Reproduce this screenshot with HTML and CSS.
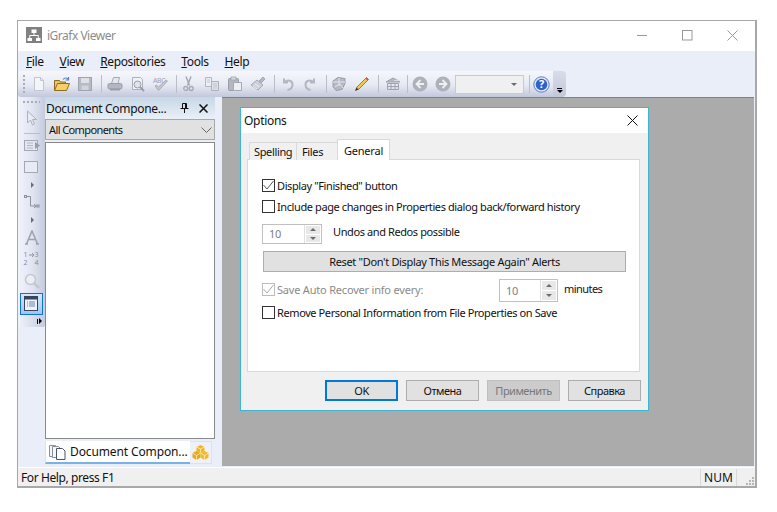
FILE: index.html
```html
<!DOCTYPE html>
<html lang="en">
<head>
<meta charset="utf-8">
<title>iGrafx Viewer</title>
<link rel="stylesheet" href="styles.css">
</head>
<body>
<div class="window">
  <header class="titlebar">
    <svg class="app-icon" width="16" height="16" viewBox="0 0 16 16"><rect width="16" height="16" fill="#808080"/><path d="M5.500 2.500h5v3.500h-5zM1.500 11h4.500v3h-4.500zM10 11h4.500v3H10z" fill="#fff"/><path d="M8 6v3M3.700 11V8.500h8.600V11" stroke="#fff" fill="none"/></svg>
    <span class="app-title">iGrafx Viewer</span>
    <span class="caption-btns">
      <svg width="11" height="11" viewBox="0 0 11 11"><path d="M0 5.500h10" stroke="#999"/></svg>
      <svg width="11" height="11" viewBox="0 0 11 11"><rect x=".5" y=".5" width="9.500" height="9.500" fill="none" stroke="#999"/></svg>
      <svg width="11" height="11" viewBox="0 0 11 11"><path d="M.500.500l10 10M10.500.500l-10 10" stroke="#999"/></svg>
    </span>
  </header>
  <nav class="menubar">
    <span><u>F</u>ile</span><span><u>V</u>iew</span><span><u>R</u>epositories</span><span><u>T</u>ools</span><span><u>H</u>elp</span>
  </nav>
  <div class="toolrow">
    <div class="toolbar">
      <i class="grip-v"></i>
      <span class="tb"><svg width="16" height="16" viewBox="0 0 16 16"><path d="M3.500 1.500h6l3 3v10h-9z" fill="#f4f5f8" stroke="#c2c5cf"/><path d="M9.500 1.500v3h3" fill="none" stroke="#c2c5cf"/></svg></span>
      <span class="tb"><svg width="18" height="16" viewBox="0 0 18 16"><path d="M1.500 14.500v-10h5l1 1.500h5v2" fill="#e8c468" stroke="#8f6b1c"/><path d="M1.500 14.500l3-7h12l-3 7z" fill="#f5cf6a" stroke="#8f6b1c"/><path d="M10 3.500c1.500-2 4-2 5.500 0M15.500 1v3h-3" fill="none" stroke="#5f7fc0" stroke-width="1.200"/></svg></span>
      <span class="tb"><svg width="16" height="16" viewBox="0 0 16 16"><rect x="1.500" y="1.500" width="13" height="13" fill="#b8bbc5" stroke="#a0a3ae"/><rect x="4" y="2" width="8" height="5" fill="#dfe1e7"/><rect x="4.500" y="9.500" width="7" height="4.500" fill="#d2d4db"/></svg></span>
      <i class="sep"></i>
      <span class="tb"><svg width="16" height="16" viewBox="0 0 16 16"><path d="M4.500 7.500l2-6h6l-1.500 6z" fill="#e6e7ec" stroke="#a6a9b3"/><rect x="1" y="7.500" width="14" height="5.500" rx="1.500" fill="#b4b7c1" stroke="#9a9da8"/><path d="M3 13.500h10" stroke="#9a9da8" stroke-width="2"/></svg></span>
      <span class="tb"><svg width="16" height="16" viewBox="0 0 16 16"><path d="M2.500 1.500h8l2 2v10h-10z" fill="#f1f2f6" stroke="#aeb1bb"/><circle cx="7.500" cy="8.500" r="3.500" fill="#dfe3ee" stroke="#9a9da8"/><path d="M10 11l4 4" stroke="#9a9da8" stroke-width="2"/></svg></span>
      <span class="tb"><svg width="17" height="16" viewBox="0 0 17 16"><text x="1" y="6.500" class="abc">ABC</text><path d="M3 10l3.500 4.500L15.500 5l-1.500-1-7.500 7-2-2z" fill="#c5c8d2" stroke="#9fa2ad" stroke-width=".8"/></svg></span>
      <i class="sep sep-narrow"></i>
      <span class="tb"><svg width="11" height="16" viewBox="0 0 11 16"><path d="M3 .500l3.500 9M8 .500L4.500 9.500" stroke="#a6a9b3" stroke-width="1.500"/><circle cx="2.800" cy="12.500" r="2" fill="none" stroke="#a6a9b3" stroke-width="1.300"/><circle cx="8.200" cy="12.500" r="2" fill="none" stroke="#a6a9b3" stroke-width="1.300"/></svg></span>
      <span class="tb"><svg width="16" height="16" viewBox="0 0 16 16"><path d="M1.500 1.500h6v9h-6z" fill="#eceef3" stroke="#b4b7c1"/><path d="M7.500 5.500h7v9h-7z" fill="#dfe1e8" stroke="#aeb1bb"/><path d="M3 4h3M3 6h3M9 8h4M9 10h4M9 12h4" stroke="#c2c5ce"/></svg></span>
      <span class="tb"><svg width="16" height="16" viewBox="0 0 16 16"><rect x="1.500" y="2.500" width="10" height="12" rx="1" fill="#b4b7c1" stroke="#9a9da8"/><rect x="4" y="1" width="5" height="3" fill="#d6d8df" stroke="#9a9da8" stroke-width=".7"/><path d="M6.500 6.500h8v8h-8z" fill="#eceef3" stroke="#a6a9b3"/></svg></span>
      <span class="tb"><svg width="16" height="16" viewBox="0 0 16 16"><path d="M1 9l6-5 6 5-5 5z" fill="#cfd1d9" stroke="#a6a9b3"/><path d="M9 5l4-4 2 2-4 4z" fill="#b4b7c1" stroke="#a6a9b3"/><path d="M3 10l4 3M5 8l4 3" stroke="#eceef3"/></svg></span>
      <i class="sep"></i>
      <span class="tb"><svg width="13" height="14" viewBox="0 0 13 14"><path d="M3 1.500v4h4M3.500 5.500C6 2.500 11.500 3 11.500 7.500c0 3-2 5-5 5.500" fill="none" stroke="#b4b7c1" stroke-width="2"/></svg></span>
      <span class="tb"><svg width="13" height="14" viewBox="0 0 13 14"><path d="M10 1.500v4H6M9.500 5.500C7 2.500 1.500 3 1.500 7.500c0 3 2 5 5 5.500" fill="none" stroke="#b4b7c1" stroke-width="2"/></svg></span>
      <i class="sep sep-narrow"></i>
      <span class="tb"><svg width="16" height="16" viewBox="0 0 16 16"><path d="M2 5l5-3.500 7 1v5l-3 6-6 1-3-4z" fill="#b6b9c3" stroke="#9a9da8"/><path d="M2 6h12M8 2v8M4 11l5-3 3 4" fill="none" stroke="#e4e6ec"/></svg></span>
      <span class="tb"><svg width="16" height="16" viewBox="0 0 16 16"><path d="M3 11L12.500 1.500l2 2L5 13l-3 1z" fill="#f0c850" stroke="#8b6a20" stroke-width=".8"/><path d="M11.500 2.500l1-1 2 2-1 1z" fill="#d0503c"/><path d="M1 15l1.500-3.500L4.500 13.500z" fill="#333"/></svg></span>
      <i class="sep sep-wide"></i>
      <span class="tb"><svg width="16" height="16" viewBox="0 0 16 16"><path d="M1 6l7-4 7 4H1z" fill="#b6b9c3" stroke="#9fa2ad"/><path d="M2.500 7.500h11v6h-11zM2.500 10.500h11M6 7.500v6M10 7.500v6" fill="none" stroke="#9fa2ad"/><path d="M9 4.500h5l-2-2" fill="none" stroke="#d8dae1"/></svg></span>
      <i class="sep sep-tight"></i>
      <span class="tb"><svg width="16" height="16" viewBox="0 0 16 16"><circle cx="8" cy="8" r="7.500" fill="#aeb1ba"/><path d="M8.500 4L4.500 8l4 4M5 8h7" fill="none" stroke="#eef0f4" stroke-width="1.800"/></svg></span>
      <span class="tb"><svg width="16" height="16" viewBox="0 0 16 16"><circle cx="8" cy="8" r="7.500" fill="#aeb1ba"/><path d="M7.500 4l4 4-4 4M11 8H4" fill="none" stroke="#eef0f4" stroke-width="1.800"/></svg></span>
      <span class="tb-combo"><i class="down-arrow"></i></span>
      <i class="sep sep-last"></i>
      <span class="tb"><svg width="17" height="17" viewBox="0 0 17 17"><circle cx="8.500" cy="8.500" r="7.700" fill="#dfe8f8" stroke="#5a7fc4"/><circle cx="8.500" cy="8.500" r="5.800" fill="#2f62c9"/><text x="8.500" y="12.200" class="help-q">?</text></svg></span>
    </div>
    <div class="overflow"><i class="overflow-dash"></i><i class="down-arrow dark"></i></div>
  </div>
  <div class="workspace">
    <aside class="palette">
      <i class="grip-h"></i>
      <span class="pal pal-first"><svg width="12" height="17" viewBox="0 0 12 17"><path d="M1.500 1v12l3-3 2 5 2-1-2-4.500h4z" fill="#e9ebf3" stroke="#aeb1bb"/></svg></span>
      <i class="pal-rule"></i>
      <span class="pal"><svg width="16" height="13" viewBox="0 0 16 13"><rect x=".5" y="1.500" width="13" height="10" fill="#e4e7f0" stroke="#a6a9b3"/><path d="M3 4h6M3 6.500h6M3 9h6" stroke="#b4b7c1"/><path d="M11 3l5 3.500-5 3.500z" fill="#9a9da8"/></svg></span>
      <span class="pal"><svg width="15" height="13" viewBox="0 0 15 13"><rect x=".5" y=".5" width="13" height="11" fill="#e8ebf4" stroke="#a6a9b3"/></svg></span>
      <span class="pal-more"></span>
      <span class="pal"><svg width="16" height="14" viewBox="0 0 16 14"><rect x=".5" y=".5" width="2" height="2" fill="none" stroke="#8d919c"/><path d="M3 1.500h3.500v9.500h6" fill="none" stroke="#8d919c"/><path d="M10 9l2.500 2-2.500 2" fill="none" stroke="#8d919c"/><rect x="13" y="10" width="2" height="2" fill="none" stroke="#8d919c"/></svg></span>
      <span class="pal-more"></span>
      <span class="pal"><svg width="16" height="15" viewBox="0 0 16 15"><path d="M1 14h3M12 14h3M2.500 14L8 1l5.500 13M4.500 9.500h7" fill="none" stroke="#a0a3ae" stroke-width="1.600"/></svg></span>
      <span class="pal"><span class="numbering"><b>1</b><svg width="6" height="8" viewBox="0 0 6 8"><path d="M0 4h5M3 2l2 2-2 2" fill="none" stroke="#9295a2"/></svg><b>3</b><b>2</b><span></span><b>4</b></span></span>
      <span class="pal"><svg width="16" height="16" viewBox="0 0 16 16"><circle cx="6.500" cy="6.500" r="5" fill="#eceef4" stroke="#c5c7d0" stroke-width="1.500"/><path d="M10 10l5 5" stroke="#c5c7d0" stroke-width="2.500"/></svg></span>
      <span class="pal-active"><svg width="15" height="16" viewBox="0 0 15 16"><rect x=".5" y=".5" width="13" height="14" fill="#eef2f8" stroke="#39455c"/><rect x=".5" y=".5" width="13" height="3" fill="#39455c"/><path d="M3 6h1M5 6h6M3 8h1M5 8h6M3 10h1M5 10h6" stroke="#6a86aa"/></svg></span>
      <div class="pal-foot"><i class="pal-foot-bar"></i><i class="right-arrow dark"></i></div>
    </aside>
    <section class="panel">
      <div class="panel-title">
        <span class="panel-name">Document Compone...</span>
        <svg width="9" height="10" viewBox="0 0 9 10"><path d="M2.500.500h4v5h-4zM.500 5.500h8M4.500 5.500V10M5.500 1v4" fill="none" stroke="#111"/></svg>
        <svg width="9" height="9" viewBox="0 0 9 9"><path d="M.500.500l8 8M8.500.500l-8 8" stroke="#111" stroke-width="1.500"/></svg>
      </div>
      <div class="panel-combo"><span>All Components</span><svg width="11" height="6" viewBox="0 0 11 6"><path d="M.500.500l5 5 5-5" fill="none" stroke="#666"/></svg></div>
      <div class="panel-list"></div>
      <div class="panel-tabs">
        <span class="ptab ptab-on">
          <svg width="17" height="16" viewBox="0 0 17 16"><path d="M.500 1.500h6l2 2v9h-8z" fill="#f2f4f8" stroke="#8a8f9a"/><path d="M3.500 2.500h6l2 2v9h-8z" fill="#f5f6fa" stroke="#8a8f9a"/><path d="M7.500 4.500h6l2.500 2.500v8.500h-8.500z" fill="#fff" stroke="#4c5564"/></svg>
          <span>Document Compon...</span>
        </span>
        <span class="ptab">
          <svg width="17" height="16" viewBox="0 0 17 16"><path d="M8.500 0l4 2v4l-4 2-4-2V2z" fill="#efb52c"/><path d="M4.500 6l4 2v4.500l-4 2.500-4-2.500V8z" fill="#e7a81f"/><path d="M12.500 6l4 2v4.500l-4 2.500-4-2.500V8z" fill="#f0b92f"/><path d="M4.500 2l4 2 4-2M.500 8l4 2.500 4-2.500 4 2.500 4-2.500M8.500 4v3M4.500 10.500V15M12.500 10.500V15" fill="none" stroke="#fff1b8" stroke-width=".8"/></svg>
        </span>
      </div>
    </section>
    <main class="mdi">
      <div class="dialog">
        <header class="dlg-title"><span>Options</span><svg width="11" height="11" viewBox="0 0 11 11"><path d="M.500.500l10 10M10.500.500l-10 10" stroke="#111"/></svg></header>
        <div class="dlg-body">
          <div class="tabs">
            <span class="tab tab-spelling">Spelling</span>
            <span class="tab tab-files">Files</span>
            <span class="tab tab-on">General</span>
          </div>
          <div class="tab-panel">
            <label class="check row-1"><span class="box"><svg width="11" height="11" viewBox="0 0 11 11"><path d="M.500 5l3.500 4 6.500-8" fill="none" stroke="#555"/></svg></span>Display "Finished" button</label>
            <label class="check row-2"><span class="box"></span>Include page changes in Properties dialog back/forward history</label>
            <div class="spin-row">
              <span class="spin"><span class="spin-val">10</span><span class="spin-btns"><i><b class="tri-up"></b></i><i><b class="tri-down"></b></i></span></span>
              <span class="spin-label">Undos and Redos possible</span>
            </div>
            <button class="reset" type="button">Reset "Don't Display This Message Again" Alerts</button>
            <div class="save-row">
              <label class="check disabled"><span class="box"><svg width="11" height="11" viewBox="0 0 11 11"><path d="M.500 5l3.500 4 6.500-8" fill="none" stroke="#aaa"/></svg></span>Save Auto Recover info every:</label>
              <span class="spin spin-2"><span class="spin-val">10</span><span class="spin-btns"><i><b class="tri-up"></b></i><i><b class="tri-down"></b></i></span></span>
              <span class="minutes">minutes</span>
            </div>
            <label class="check row-last"><span class="box"></span>Remove Personal Information from File Properties on Save</label>
          </div>
          <div class="dlg-btns">
            <button class="btn btn-default" type="button">OK</button>
            <button class="btn" type="button">Отмена</button>
            <button class="btn btn-off" type="button" disabled>Применить</button>
            <button class="btn" type="button">Справка</button>
          </div>
        </div>
      </div>
    </main>
  </div>
  <footer class="statusbar">
    <span class="status-msg">For Help, press F1</span>
    <span class="status-num">NUM</span>
    <span class="status-grip"><svg width="10" height="10" viewBox="0 0 10 10"><path d="M7 1h2v2H7zM4 4h2v2H4zM7 4h2v2H7zM1 7h2v2H1zM4 7h2v2H4zM7 7h2v2H7z" fill="#b4b4b4"/></svg></span>
  </footer>
</div>
</body>
</html>
```
FILE: styles.css
```css
* { box-sizing: border-box; }
html, body { margin: 0; height: 100%; background: #fff; }
body { padding: 20px 20px 24px 17px; font-family: "Noto Sans", sans-serif; font-size: 11px; letter-spacing: -.4px; color: #111; overflow: hidden; }
i { display: block; }

.window { width: 740px; height: 468px; border: 1.5px solid #a8a8a8; border-width: 1px 2px 2px 1px; display: flex; flex-direction: column; background: #eaeef8; position: relative; }

.titlebar { height: 30px; background: #fff; display: flex; align-items: center; padding: 0 0 2px 8px; flex: none; }
.app-title { margin-left: 5px; font-size: 12px; letter-spacing: -.5px; color: #8c8c8c; }
.caption-btns { margin-left: auto; display: flex; gap: 34px; padding-right: 17px; }
.caption-btns svg { display: block; }

.menubar { height: 20px; display: flex; gap: 16px; padding-left: 8px; align-items: center; font-size: 12px; letter-spacing: -.4px; flex: none; }

.toolrow { height: 26px; display: flex; flex: none; padding-left: 0; }
.toolbar { width: 535px; height: 26px; display: flex; align-items: center; padding-left: 3px; background: linear-gradient(#f6f7fc, #e6e9f3 55%, #c2c8db); border-radius: 3px 0 0 3px; }
.grip-v { width: 2px; height: 18px; margin: 0 2px 0 2px; background: repeating-linear-gradient(#a9adbb 0 2px, transparent 2px 4px); }
.tb { width: 23px; height: 22px; display: flex; align-items: center; justify-content: center; flex: none; }
.tb svg { display: block; }
.abc { font: 7px "Noto Sans", sans-serif; fill: #a0a3ae; }
.help-q { font: bold 11px "Noto Sans", sans-serif; fill: #fff; text-anchor: middle; }
.sep { width: 1px; height: 18px; background: #b9bdcc; margin: 0 1px 0 5px; flex: none; }
.sep-narrow { margin: 0 0 0 4px; }
.sep-wide { margin: 0 2px 0 5px; }
.sep-tight { margin: 0 0 0 3px; }
.sep-last { margin: 0 0 0 5px; }
.tb-combo { width: 69px; height: 19px; margin-left: 1px; background: #f0f0f0; border: 1px solid #c7cad4; display: flex; align-items: center; justify-content: flex-end; padding-right: 6px; flex: none; }
.down-arrow { width: 0; height: 0; border: 3px solid transparent; border-top: 3px solid #6c6c6c; border-bottom: 0; }
.down-arrow.dark { border-top-color: #000; }
.overflow { width: 13px; height: 26px; background: linear-gradient(#d8dcea, #c2c8db); border-radius: 0 4px 4px 0; display: flex; flex-direction: column; align-items: center; justify-content: flex-end; padding-bottom: 4px; gap: 1px; }
.overflow-dash { width: 5px; height: 1px; background: #000; }

.workspace { flex: 1; display: flex; min-height: 0; }

.palette { width: 27px; height: 230px; flex: none; display: flex; flex-direction: column; align-items: center; background: linear-gradient(90deg, #f0f3fb, #e0e4f1 55%, #c5cbde); border-radius: 0 0 3px 3px; }
.grip-h { width: 17px; height: 2px; margin: 4px 0 0; background: repeating-linear-gradient(90deg, #a9adbb 0 2px, transparent 2px 4px); flex: none; }
.pal { height: 22px; display: flex; align-items: center; justify-content: center; flex: none; }
.pal svg { display: block; }
.pal-first { margin-top: 4px; height: 22px; }
.pal-rule { width: 16px; height: 1px; background: #b9bdcc; margin: 4px 0 0; flex: none; }
.pal-more { width: 0; height: 0; border: 3px solid transparent; border-left: 3px solid #6c6c6c; border-right: 0; margin: 4px 0 3px 1px; flex: none; }
.numbering { display: grid; grid-template-columns: 5px 6px 5px; font-size: 7px; line-height: 8px; letter-spacing: 0; color: #8a8d9a; }
.numbering b { font-weight: 400; }
.pal-active { width: 23px; height: 22px; margin-top: 1px; display: flex; align-items: center; justify-content: center; border: 1px solid #0e74d0; background: linear-gradient(#d7e8fa, #9cc6ef); flex: none; }
.pal-active svg { display: block; }
.pal-foot { width: 27px; height: 12px; background: linear-gradient(90deg, #f0f3fb, #c5cbde); border-radius: 0 0 3px 3px; margin-top: 0; display: flex; align-items: center; justify-content: flex-end; padding-right: 3px; gap: 1px; }
.pal-foot-bar { width: 1px; height: 5px; background: #000; }
.right-arrow { width: 0; height: 0; border: 3px solid transparent; border-left: 3px solid #000; border-right: 0; }

.panel { width: 170px; flex: none; display: flex; flex-direction: column; margin-right: 7px; }
.panel-title { height: 22px; display: flex; align-items: center; gap: 10px; padding: 0 7px 0 1px; background: linear-gradient(#c6d7e6, #eaf0f8); flex: none; }
.panel-name { font-size: 12px; letter-spacing: -.33px; flex: 1; white-space: nowrap; }
.panel-combo { height: 21px; border: 1px solid #a8a8a8; background: #e1e1e1; display: flex; align-items: center; justify-content: space-between; padding: 0 2px 0 3px; flex: none; letter-spacing: -.6px; }
.panel-list { height: 297px; margin-top: 2px; background: #fff; border: 1px solid #8a8a8a; flex: none; }
.panel-tabs { height: 24px; margin-top: 2px; display: flex; flex: none; }
.ptab { display: flex; align-items: center; justify-content: center; width: 22px; height: 23px; border: 1px solid #dde1ec; border-left: 0; background: #eef1f9; }
.ptab-on { width: 145px; gap: 4px; justify-content: flex-start; padding-left: 3px; background: #fff; border: 0; border-left: 1px solid #dde1ec; border-bottom: 2px solid #7ab2e6; font-size: 12px; letter-spacing: -.12px; white-space: nowrap; }
.ptab svg { flex: none; display: block; }

.mdi { width: 532px; flex: none; height: 369px; background: #ababab; border-top: 1px solid #808080; position: relative; }

.dialog { position: absolute; left: 18px; top: 9px; width: 409px; height: 304px; border: 1px solid #3fb6cf; background: #f0f0f0; display: flex; flex-direction: column; }
.dlg-title { height: 25px; background: #fff; display: flex; align-items: center; justify-content: space-between; padding: 0 10px 0 3px; font-size: 12px; letter-spacing: -.3px; flex: none; }
.dlg-title svg { display: block; }
.dlg-body { flex: 1; padding: 7px 8px 0 6px; display: flex; flex-direction: column; }

.tabs { height: 20px; display: flex; align-items: flex-end; flex: none; padding-left: 2px; position: relative; z-index: 1; margin-bottom: -1px; }
.tab { height: 18px; border: 1px solid #d9d9d9; border-bottom: 0; display: flex; align-items: center; background: #f0f0f0; margin-right: -1px; letter-spacing: -.35px; }
.tab-spelling { width: 48px; padding-left: 4px; }
.tab-files { width: 42px; padding-left: 5px; }
.tab-on { width: 53px; height: 21px; background: #fff; margin-right: 0; justify-content: center; letter-spacing: -.2px; }

.tab-panel { height: 213px; background: #fff; border: 1px solid #d9d9d9; padding: 19px 13px 0 14px; display: flex; flex-direction: column; flex: none; }
.check { display: flex; align-items: center; gap: 2px; height: 13px; white-space: nowrap; }
.box { width: 13px; height: 13px; border: 1px solid #333; display: flex; align-items: center; justify-content: center; background: #fff; flex: none; }
.box svg { display: block; }
.row-2 { margin-top: 8px; }
.spin-row { display: flex; align-items: flex-start; margin-top: 11px; height: 20px; }
.spin { width: 60px; height: 20px; background: #fff; border: 1px solid #c0c0c0; display: flex; flex: none; }
.spin-val { flex: 1; padding-left: 6px; color: #808080; line-height: 18px; }
.spin-btns { width: 17px; display: flex; flex-direction: column; gap: 1px; padding: 1px; background: #fff; border-left: 1px solid #e0e0e0; }
.spin-btns i { flex: 1; background: #e8e8e8; display: flex; align-items: center; justify-content: center; }
.tri-up { width: 0; height: 0; border: 3px solid transparent; border-bottom: 3px solid #6c6c6c; border-top: 0; }
.tri-down { width: 0; height: 0; border: 3px solid transparent; border-top: 3px solid #6c6c6c; border-bottom: 0; }
.spin-label { margin-left: 11px; line-height: 16px; }
.reset { display: block; width: 363px; height: 21px; margin: 7px 0 0 1px; background: #e1e1e1; border: 1px solid #adadad; font: inherit; letter-spacing: -.33px; color: #111; padding: 0; }
.save-row { display: flex; align-items: flex-start; margin-top: 7px; height: 23px; }
.save-row .check { width: 237px; margin-top: 4px; }
.disabled { color: #8a8a8a; letter-spacing: -.2px; }
.disabled .box { border-color: #bcbcbc; }
.spin-2 { height: 23px; width: 59px; }
.spin-2 .spin-val { line-height: 21px; }
.minutes { margin-left: 6px; line-height: 20px; letter-spacing: -.55px; }
.row-last { margin-top: 4px; }

.dlg-btns { display: flex; gap: 8px; justify-content: flex-end; margin-top: 8px; margin-right: -1px; }
.btn { width: 73px; height: 21px; background: #e1e1e1; border: 1px solid #adadad; font: inherit; letter-spacing: -.5px; color: #111; padding: 0; }
.btn-default { border: 2px solid #0078d7; }
.btn-off { background: #cccccc; color: #787878; border-color: #bfbfbf; }

.statusbar { height: 19px; margin-top: auto; background: #f0f0f0; border-top: 1px solid #fff; display: flex; align-items: center; flex: none; }
.status-msg { flex: 1; padding-left: 3px; font-size: 12px; }
.status-num { width: 37px; height: 17px; border-left: 1px solid #d9d9d9; border-right: 1px solid #d9d9d9; text-align: center; line-height: 17px; font-size: 12px; letter-spacing: 0; }
.status-grip { width: 18px; display: flex; justify-content: flex-end; align-self: flex-end; }
.status-grip svg { display: block; }
```
